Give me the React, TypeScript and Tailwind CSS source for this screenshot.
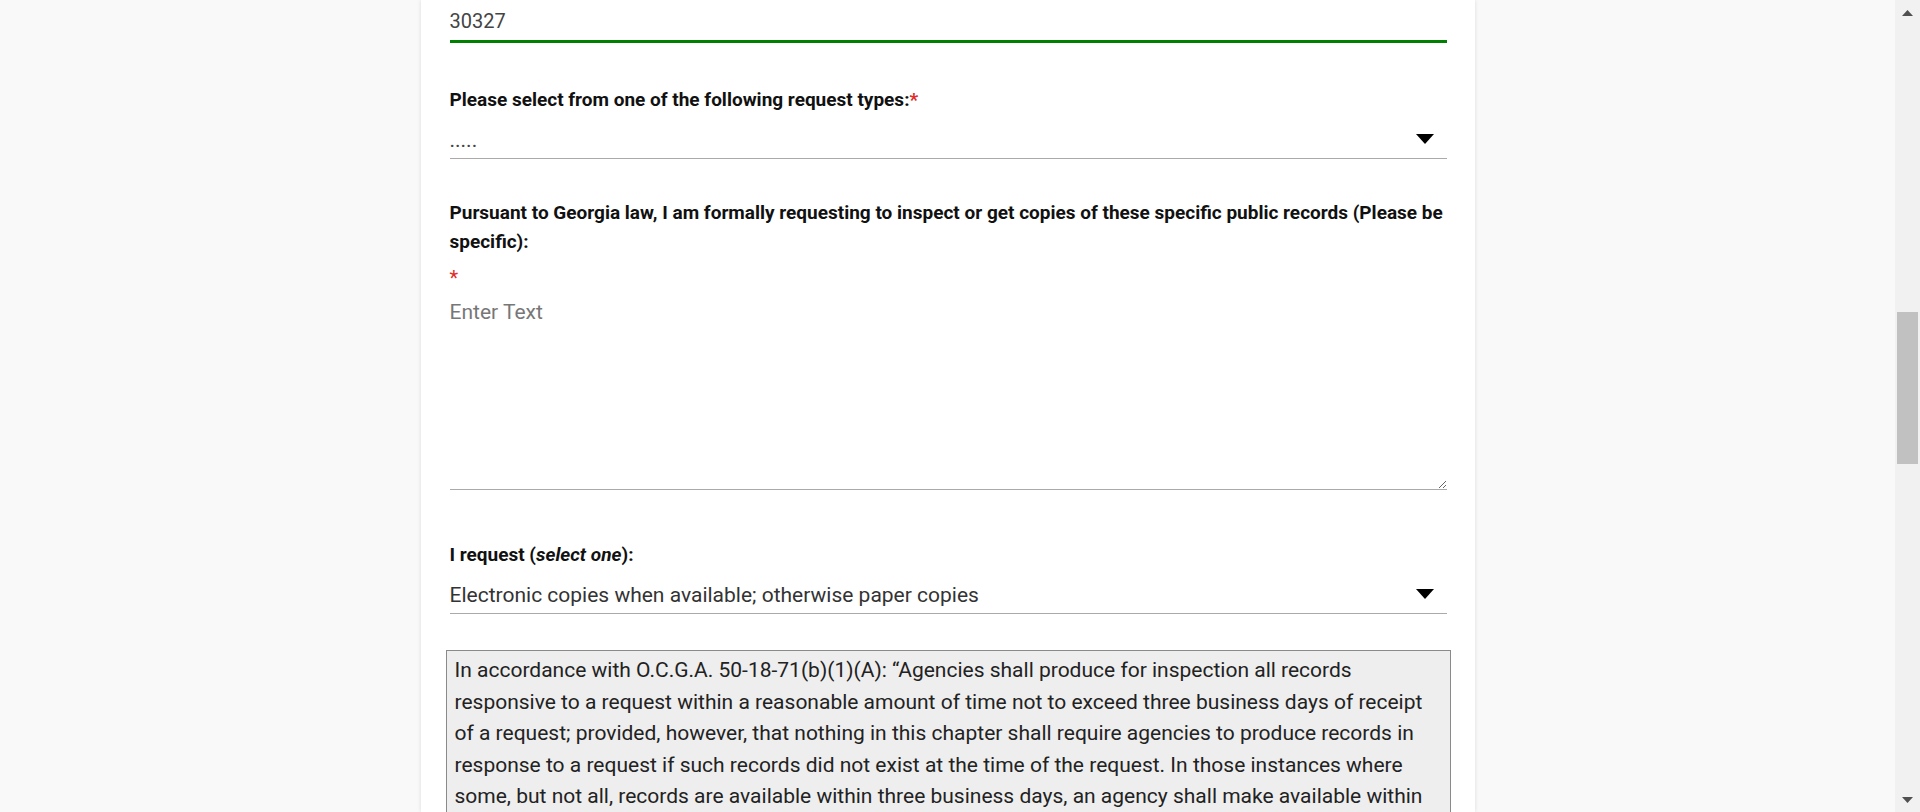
import React from "react";

const boxText =
  "In accordance with O.C.G.A. 50-18-71(b)(1)(A): “Agencies shall produce for inspection all records responsive to a request within a reasonable amount of time not to exceed three business days of receipt of a request; provided, however, that nothing in this chapter shall require agencies to produce records in response to a request if such records did not exist at the time of the request. In those instances where some, but not all, records are available within three business days, an agency shall make available within that period those records that can be located and produced.”";

function Arrow() {
  return (
    <svg width="18" height="10" viewBox="0 0 18 10" className="mt-[2px] shrink-0">
      <polygon points="0,0 18,0 9,10" fill="#000" />
    </svg>
  );
}

function Select({ value, color }: { value: string; color: string }) {
  return (
    <div className="flex h-[42px] items-center justify-between border-b border-[#aaaaaa] pr-[13px]">
      <span className={`pt-[4px] text-[21px] leading-[28px] ${color}`}>{value}</span>
      <Arrow />
    </div>
  );
}

function Star() {
  return <span className="text-[#e02b27]">*</span>;
}

export default function App() {
  return (
    <div
      className="flex h-[812px] w-[1920px] overflow-hidden bg-[#f9f9f9]"
      style={{ fontFamily: "Roboto, 'Liberation Sans', sans-serif" }}
    >
      <div className="flex flex-1 justify-center overflow-hidden">
        <div className="w-[1054px] shrink-0 bg-white pl-[29px] pr-[28px] shadow-[0_0_4px_rgba(0,0,0,0.12)]">
          {/* zip input */}
          <div className="flex h-[43px] items-center border-b-[3px] border-[#008000] text-[20px] leading-none text-[#444444]">
            <span className="pt-[1px]">30327</span>
          </div>

          {/* request types */}
          <div className="mt-[42px] text-[19px] font-bold leading-[29px] text-[#111111]">
            Please select from one of the following request types:
            <Star />
          </div>
          <div className="mt-[3px]">
            <Select value="....." color="text-[#444444]" />
          </div>

          {/* specific records */}
          <div className="mt-[39px] text-[19px] font-bold leading-[29.2px] text-[#111111]">
            Pursuant to Georgia law, I am formally requesting to inspect or get copies of
            these specific public records (Please be specific):
          </div>
          <div className="mt-[8px] text-[20px] leading-[29px]">
            <Star />
          </div>
          <textarea
            placeholder="Enter Text"
            className="mt-[5px] block h-[192px] w-full resize-y border-0 border-b border-[#aaaaaa] bg-white p-0 text-[21px] leading-[28px] text-[#333333] outline-none placeholder:text-[#777777]"
          />

          {/* I request */}
          <div className="mt-[50px] text-[19px] font-bold leading-[29px] text-[#111111]">
            I request (<em>select one</em>):
          </div>
          <div className="mt-[3px]">
            <Select
              value="Electronic copies when available; otherwise paper copies"
              color="text-[#333333]"
            />
          </div>

          {/* notice box */}
          <div className="-mx-[4px] mt-[36px] border border-[#8a8a8a] bg-[#eeeeee] px-[8px] pt-[4px] text-[21px] leading-[31.5px] text-[#222222]">
            {boxText}
          </div>
        </div>
      </div>

      {/* scrollbar */}
      <div className="flex w-[25px] shrink-0 flex-col items-center bg-[#f1f1f1]">
        <div className="flex h-[25px] w-full items-center justify-center">
          <svg width="11" height="6" viewBox="0 0 11 6">
            <polygon points="0,6 11,6 5.5,0" fill="#505050" />
          </svg>
        </div>
        <div className="mt-[287px] h-[152px] w-[21px] bg-[#c1c1c1]" />
        <div className="flex-1" />
        <div className="flex h-[25px] w-full items-center justify-center">
          <svg width="11" height="6" viewBox="0 0 11 6">
            <polygon points="0,0 11,0 5.5,6" fill="#505050" />
          </svg>
        </div>
      </div>
    </div>
  );
}
